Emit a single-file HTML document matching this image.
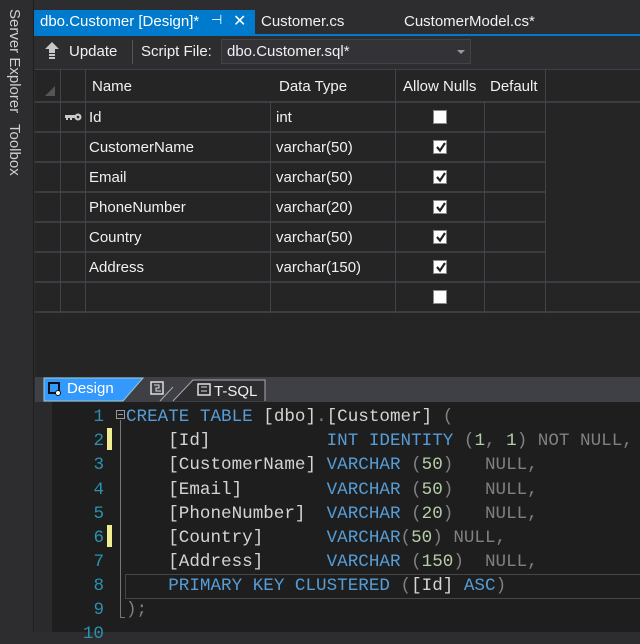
<!DOCTYPE html>
<html><head><meta charset="utf-8"><style>
*{margin:0;padding:0;box-sizing:border-box}
body{width:640px;height:632px;background:#2d2d30;overflow:hidden;position:relative;font-family:"Liberation Sans",sans-serif;font-size:15px;color:#f1f1f1}
.a{position:absolute}
.side{left:0;top:0;width:34px;height:632px;background:#2d2d30;border-right:1px solid #1e1e1e}
.vt{position:absolute;left:6px;writing-mode:vertical-rl;font-size:15px;color:#d0d0d0;white-space:nowrap}
.grid{left:35px;top:69px;width:605px;height:308px;background:#252526}
.hl{position:absolute;height:2px;background:#3c3c42}
.vl{position:absolute;width:1px;background:#434349}
.cell{position:absolute;font-size:15px;color:#f1f1f1;white-space:nowrap}
.cb{position:absolute;width:14px;height:14px;background:#fff;border:1px solid #888}
.cb svg{position:absolute;left:1px;top:0}
.code{left:35px;top:402px;width:605px;height:230px;background:#1e1e1e}
.ln{position:absolute;left:62px;width:42px;text-align:right;color:#2b91af;font-family:"Liberation Mono",monospace;font-size:17.6px}
.cl{position:absolute;left:126px;font-family:"Liberation Mono",monospace;font-size:17.6px;white-space:pre;color:#d4d4d4}
.k{color:#569cd6}.g{color:#808080}.n{color:#b5cea8}
</style></head><body>
<div class="a side">
<div class="vt" style="top:9px">Server Explorer</div>
<div class="vt" style="top:124px">Toolbox</div>
</div>
<div class="a" style="left:35px;top:0;width:605px;height:37px;background:#2d2d30"></div>
<div class="a" style="left:34px;top:10px;width:221px;height:25px;background:#007acc"></div>
<div class="a" style="left:40px;top:13px;color:#fff">dbo.Customer [Design]*</div>
<div class="a" style="left:211px;top:12px;font-size:13px;color:#fff">⊣</div>
<div class="a" style="left:233px;top:11px;font-size:16px;color:#fff">✕</div>
<div class="a" style="left:261px;top:13px;color:#f1f1f1">Customer.cs</div>
<div class="a" style="left:404px;top:13px;color:#f1f1f1">CustomerModel.cs*</div>
<div class="a" style="left:34px;top:34px;width:606px;height:2px;background:#007acc"></div>
<div class="a" style="left:35px;top:36px;width:605px;height:33px;background:#2d2d30"></div>
<svg class="a" style="left:44px;top:41px" width="16" height="20"><path d="M8 1 L15 8 L11 8 L11 12 L5 12 L5 8 L1 8Z" fill="#c8c8c8"/><rect x="5" y="13" width="6" height="2" fill="#c8c8c8"/><rect x="5" y="16" width="6" height="2" fill="#c8c8c8"/></svg>
<div class="a" style="left:69px;top:43px">Update</div>
<div class="a" style="left:132px;top:40px;width:1px;height:24px;background:#555"></div>
<div class="a" style="left:141px;top:43px">Script File:</div>
<div class="a" style="left:221px;top:39px;width:250px;height:25px;border:1px solid #434346;background:#333337"></div>
<div class="a" style="left:227px;top:43px">dbo.Customer.sql*</div>
<div class="a" style="left:457px;top:50px;width:0;height:0;border-left:4px solid transparent;border-right:4px solid transparent;border-top:4px solid #999"></div>
<div class="a grid">
<div class="hl" style="left:0;top:0;width:605px;height:1px;background:#3f3f46"></div>
<div class="hl" style="left:0;top:32px;width:605px"></div>
<div class="hl" style="left:0;top:62px;width:511px"></div>
<div class="hl" style="left:0;top:92px;width:511px"></div>
<div class="hl" style="left:0;top:122px;width:511px"></div>
<div class="hl" style="left:0;top:152px;width:511px"></div>
<div class="hl" style="left:0;top:182px;width:511px"></div>
<div class="hl" style="left:0;top:212px;width:605px"></div>
<div class="hl" style="left:0;top:242px;width:605px"></div>
<div class="vl" style="left:25px;top:0;height:244px"></div>
<div class="vl" style="left:50px;top:0;height:244px"></div>
<div class="vl" style="left:235px;top:32px;height:212px"></div>
<div class="vl" style="left:360px;top:0;height:244px"></div>
<div class="vl" style="left:449px;top:32px;height:212px"></div>
<div class="vl" style="left:510px;top:0;height:244px"></div>
<div class="a" style="left:10px;top:17px;width:0;height:0;border-left:10px solid transparent;border-bottom:10px solid #555"></div>
<div class="cell" style="left:57px;top:9px">Name</div>
<div class="cell" style="left:244px;top:9px">Data Type</div>
<div class="cell" style="left:368px;top:9px">Allow Nulls</div>
<div class="cell" style="left:455px;top:9px">Default</div>
<svg class="a" style="left:30px;top:44px" width="18" height="8"><circle cx="13" cy="4" r="3.5" fill="#c8c8c8"/><circle cx="13" cy="4" r="1.3" fill="#252526"/><rect x="0" y="2" width="10" height="3" fill="#c8c8c8"/><rect x="1" y="5" width="2" height="2" fill="#c8c8c8"/><rect x="5" y="5" width="2" height="2" fill="#c8c8c8"/></svg>
<div class="cell" style="left:54px;top:40px">Id</div><div class="cell" style="left:241px;top:40px">int</div>
<div class="cell" style="left:54px;top:70px">CustomerName</div><div class="cell" style="left:241px;top:70px">varchar(50)</div>
<div class="cell" style="left:54px;top:100px">Email</div><div class="cell" style="left:241px;top:100px">varchar(50)</div>
<div class="cell" style="left:54px;top:130px">PhoneNumber</div><div class="cell" style="left:241px;top:130px">varchar(20)</div>
<div class="cell" style="left:54px;top:160px">Country</div><div class="cell" style="left:241px;top:160px">varchar(50)</div>
<div class="cell" style="left:54px;top:190px">Address</div><div class="cell" style="left:241px;top:190px">varchar(150)</div>
<div class="cb" style="left:398px;top:41px"></div>
<div class="cb" style="left:398px;top:71px"><svg width="12" height="12"><path d="M2 6 L5 9.5 L10 2" stroke="#222" stroke-width="2.2" fill="none"/></svg></div>
<div class="cb" style="left:398px;top:101px"><svg width="12" height="12"><path d="M2 6 L5 9.5 L10 2" stroke="#222" stroke-width="2.2" fill="none"/></svg></div>
<div class="cb" style="left:398px;top:131px"><svg width="12" height="12"><path d="M2 6 L5 9.5 L10 2" stroke="#222" stroke-width="2.2" fill="none"/></svg></div>
<div class="cb" style="left:398px;top:161px"><svg width="12" height="12"><path d="M2 6 L5 9.5 L10 2" stroke="#222" stroke-width="2.2" fill="none"/></svg></div>
<div class="cb" style="left:398px;top:191px"><svg width="12" height="12"><path d="M2 6 L5 9.5 L10 2" stroke="#222" stroke-width="2.2" fill="none"/></svg></div>
<div class="cb" style="left:398px;top:221px"></div>
</div>
<div class="a" style="left:35px;top:377px;width:605px;height:25px;background:#3f3f46"></div>
<svg class="a" style="left:43px;top:377px" width="230" height="25">
<path d="M1 1 L100 1 L80 24 L1 24Z" fill="#3399ff" stroke="#9cc" stroke-width="1"/>
<path d="M130 24 L150 3 L222 3 L222 24" fill="#2d2d30" stroke="#aaa" stroke-width="1"/>
<path d="M117 24 L130 10" stroke="#aaa"/>
<rect x="6" y="6" width="10" height="10" fill="none" stroke="#111" stroke-width="2"/><circle cx="15" cy="16" r="2.5" fill="#fff" stroke="#111"/>
<rect x="108" y="5" width="12" height="12" fill="none" stroke="#ddd" stroke-width="1.5"/><path d="M111 8h5v3h-3v3h5" stroke="#ddd" fill="none"/>
<rect x="155" y="7" width="12" height="11" fill="none" stroke="#ddd" stroke-width="1.5"/><path d="M158 10h6M158 14h6" stroke="#ddd"/>
</svg>
<div class="a" style="left:67px;top:380px;color:#fff">Design</div>
<div class="a" style="left:214px;top:383px;color:#f1f1f1">T-SQL</div>
<div class="a code"></div>
<div class="a" style="left:35px;top:402px;width:17px;height:230px;background:#2a2a2c"></div>
<div class="a" style="left:107px;top:428px;width:5px;height:22px;background:#efef91"></div>
<div class="a" style="left:107px;top:525px;width:5px;height:22px;background:#efef91"></div>
<div class="a" style="left:116px;top:410px;width:9px;height:9px;border:1px solid #999"></div>
<div class="a" style="left:118px;top:414px;width:5px;height:1px;background:#999"></div>
<div class="a" style="left:120px;top:420px;width:1px;height:198px;background:#777"></div>
<div class="a" style="left:120px;top:617px;width:5px;height:1px;background:#777"></div>
<div class="a" style="left:125px;top:574px;width:515px;height:25px;border:1px solid #464646;border-right:none"></div>
<div class="ln" style="top:407px">1</div>
<div class="ln" style="top:431px">2</div>
<div class="ln" style="top:455px">3</div>
<div class="ln" style="top:480px">4</div>
<div class="ln" style="top:504px">5</div>
<div class="ln" style="top:528px">6</div>
<div class="ln" style="top:552px">7</div>
<div class="ln" style="top:576px">8</div>
<div class="ln" style="top:600px">9</div>
<div class="ln" style="top:624px">10</div>
<div class="cl" style="top:407px"><span class="k">CREATE TABLE</span> [dbo]<span class="g">.</span>[Customer] <span class="g">(</span></div>
<div class="cl" style="top:431px">    [Id]           <span class="k">INT IDENTITY</span> <span class="g">(</span><span class="n">1</span><span class="g">,</span> <span class="n">1</span><span class="g">) NOT NULL,</span></div>
<div class="cl" style="top:455px">    [CustomerName] <span class="k">VARCHAR</span> <span class="g">(</span><span class="n">50</span><span class="g">)   NULL,</span></div>
<div class="cl" style="top:480px">    [Email]        <span class="k">VARCHAR</span> <span class="g">(</span><span class="n">50</span><span class="g">)   NULL,</span></div>
<div class="cl" style="top:504px">    [PhoneNumber]  <span class="k">VARCHAR</span> <span class="g">(</span><span class="n">20</span><span class="g">)   NULL,</span></div>
<div class="cl" style="top:528px">    [Country]      <span class="k">VARCHAR</span><span class="g">(</span><span class="n">50</span><span class="g">) NULL,</span></div>
<div class="cl" style="top:552px">    [Address]      <span class="k">VARCHAR</span> <span class="g">(</span><span class="n">150</span><span class="g">)  NULL,</span></div>
<div class="cl" style="top:576px">    <span class="k">PRIMARY KEY CLUSTERED</span> <span class="g">(</span>[Id] <span class="k">ASC</span><span class="g">)</span></div>
<div class="cl" style="top:600px"><span class="g">);</span></div>
</body></html>
